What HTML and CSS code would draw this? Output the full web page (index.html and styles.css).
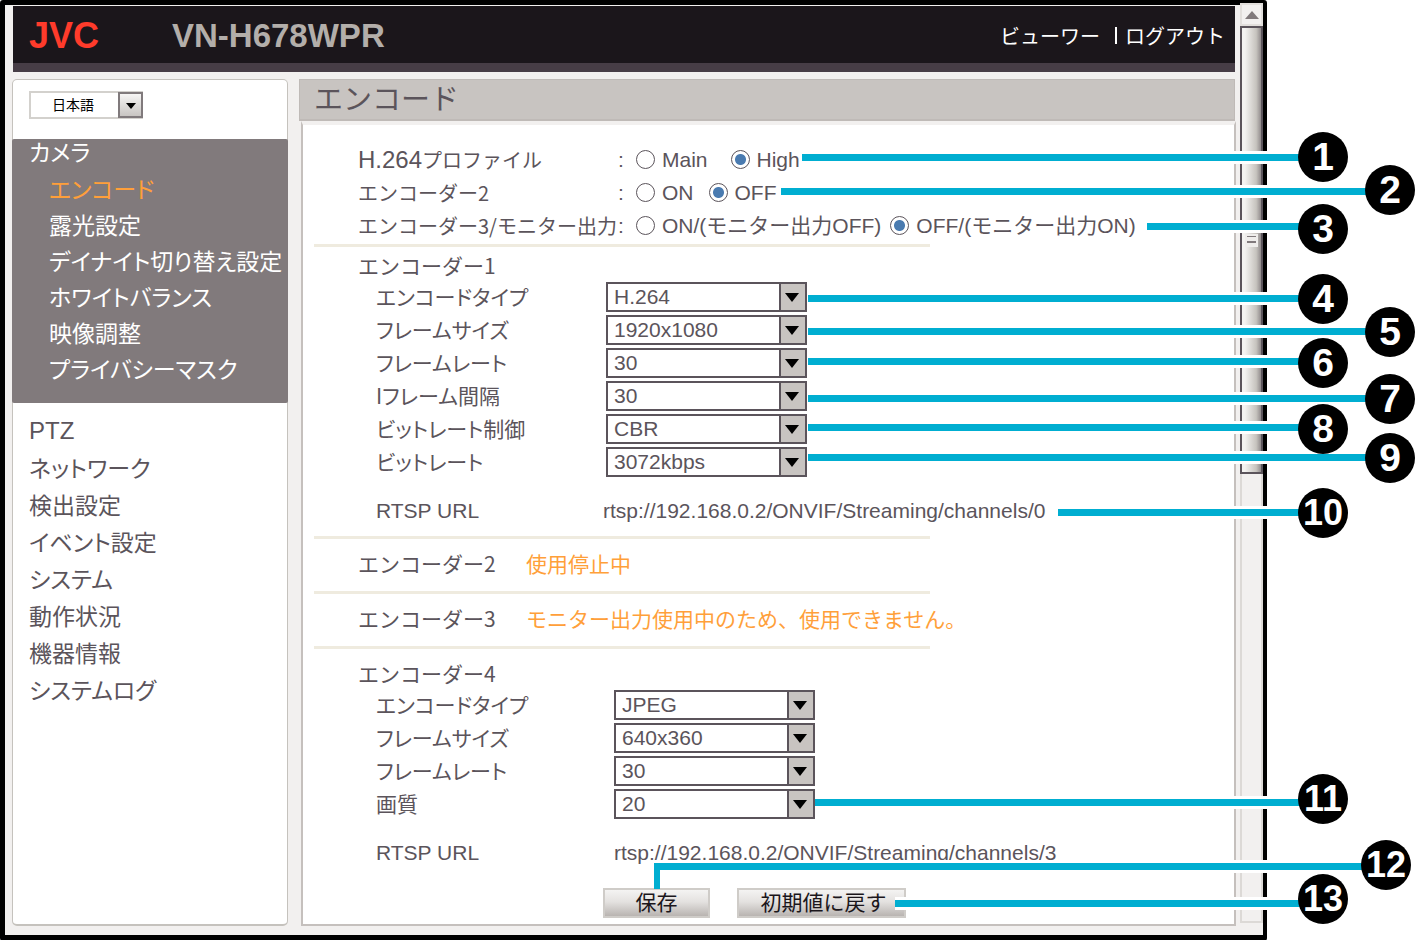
FILE: index.html
```html
<!DOCTYPE html>
<html lang="ja">
<head>
<meta charset="utf-8">
<title>VN-H678WPR エンコード</title>
<link rel="stylesheet" href="styles.css">
</head>
<body>
<div class="frame">
  <div class="page">
    <header class="header">
      <span class="logo">JVC</span>
      <span class="model">VN-H678WPR</span>
      <nav class="top-links"><a href="#">ビューワー</a><span class="bar"></span><a href="#">ログアウト</a></nav>
    </header>
    <div class="columns">
      <aside class="sidebar">
        <div class="language">
          <span class="lang-box"><select class="lang-select" aria-label="言語"><option>日本語</option></select></span>
        </div>
        <nav class="camera-menu">
          <a class="camera" href="#">カメラ</a>
          <a class="sub active" href="#">エンコード</a>
          <a class="sub" href="#">露光設定</a>
          <a class="sub" href="#">デイナイト切り替え設定</a>
          <a class="sub" href="#">ホワイトバランス</a>
          <a class="sub" href="#">映像調整</a>
          <a class="sub" href="#">プライバシーマスク</a>
        </nav>
        <nav class="menu">
          <a class="latin" href="#">PTZ</a>
          <a href="#">ネットワーク</a>
          <a href="#">検出設定</a>
          <a href="#">イベント設定</a>
          <a href="#">システム</a>
          <a href="#">動作状況</a>
          <a href="#">機器情報</a>
          <a href="#">システムログ</a>
        </nav>
      </aside>
      <main class="main">
        <h1 class="title">エンコード</h1>
        <form class="panel">
          <div class="row" role="radiogroup" aria-label="H.264プロファイル">
            <span class="name"><span class="latin">H.264</span>プロファイル</span><span class="colon">:</span>
            <label class="choice wide"><input class="radio" type="radio" name="profile">Main</label>
            <label class="choice"><input class="radio" type="radio" name="profile" checked>High</label>
          </div>
          <div class="row" role="radiogroup" aria-label="エンコーダー2">
            <span class="name">エンコーダー2</span><span class="colon">:</span>
            <label class="choice medium"><input class="radio" type="radio" name="enc2">ON</label>
            <label class="choice"><input class="radio" type="radio" name="enc2" checked>OFF</label>
          </div>
          <div class="row" role="radiogroup" aria-label="エンコーダー3/モニター出力">
            <span class="name">エンコーダー3/モニター出力</span><span class="colon">:</span>
            <label class="choice"><input class="radio" type="radio" name="enc3">ON/(モニター出力OFF)</label>
            <label class="choice"><input class="radio" type="radio" name="enc3" checked>OFF/(モニター出力ON)</label>
          </div>
          <hr class="rule">
          <h2 class="section">エンコーダー1</h2>
          <div class="fields">
            <label for="type1">エンコードタイプ</label><span class="select"><select id="type1"><option>H.264</option></select></span>
            <label for="size1">フレームサイズ</label><span class="select"><select id="size1"><option>1920x1080</option></select></span>
            <label for="rate1">フレームレート</label><span class="select"><select id="rate1"><option>30</option></select></span>
            <label for="iframe1">Iフレーム間隔</label><span class="select"><select id="iframe1"><option>30</option></select></span>
            <label for="control1">ビットレート制御</label><span class="select"><select id="control1"><option>CBR</option></select></span>
            <label for="bitrate1">ビットレート</label><span class="select"><select id="bitrate1"><option>3072kbps</option></select></span>
          </div>
          <div class="url-row"><span class="url-name">RTSP URL</span><span>rtsp://192.168.0.2/ONVIF/Streaming/channels/0</span></div>
          <hr class="rule">
          <div class="status"><h2>エンコーダー2</h2><span class="notice">使用停止中</span></div>
          <hr class="rule">
          <div class="status"><h2>エンコーダー3</h2><span class="notice">モニター出力使用中のため、使用できません。</span></div>
          <hr class="rule">
          <h2 class="section last">エンコーダー4</h2>
          <div class="fields shifted">
            <label for="type4">エンコードタイプ</label><span class="select"><select id="type4"><option>JPEG</option></select></span>
            <label for="size4">フレームサイズ</label><span class="select"><select id="size4"><option>640x360</option></select></span>
            <label for="rate4">フレームレート</label><span class="select"><select id="rate4"><option>30</option></select></span>
            <label for="quality4">画質</label><span class="select"><select id="quality4"><option>20</option></select></span>
          </div>
          <div class="url-row shifted"><span class="url-name">RTSP URL</span><span>rtsp://192.168.0.2/ONVIF/Streaming/channels/3</span></div>
          <div class="actions">
            <button class="button save" type="button">保存</button>
            <button class="button reset" type="button">初期値に戻す</button>
          </div>
        </form>
      </main>
    </div>
  </div>
  <div class="scrollbar" aria-hidden="true">
    <div class="scroll-up"></div>
    <div class="track"><div class="thumb"><span class="grip"></span></div></div>
  </div>
</div>
<div class="callout c1"><b>1</b></div>
<div class="callout c2"><b>2</b></div>
<div class="callout c3"><b>3</b></div>
<div class="callout c4"><b>4</b></div>
<div class="callout c5"><b>5</b></div>
<div class="callout c6"><b>6</b></div>
<div class="callout c7"><b>7</b></div>
<div class="callout c8"><b>8</b></div>
<div class="callout c9"><b>9</b></div>
<div class="callout double c10"><b>10</b></div>
<div class="callout double c11"><b>11</b></div>
<div class="callout double c12"><b>12</b></div>
<div class="callout double c13"><b>13</b></div>
</body>
</html>
```
FILE: styles.css
```css
*, *::before, *::after { box-sizing: border-box; }

body {
  position: relative;
  margin: 0;
  background: #fff;
  color: #5b545b;
  font-family: "Liberation Sans", "Noto Sans CJK JP", sans-serif;
  font-size: 20px;
}

a { color: inherit; text-decoration: none; }
h1, h2 { margin: 0; font-weight: normal; }

.latin { font-family: "Liberation Sans", sans-serif; font-size: 24px; }

.frame {
  display: flex;
  min-height: 100vh;
  margin-right: 151px;
  border: 5px solid #000;
  border-right-width: 4px;
  border-bottom-width: 6px;
  border-radius: 3px;
  background: #f2f0ef;
}

.page {
  flex: 1;
  display: flex;
  flex-direction: column;
  gap: 7px;
  min-width: 0;
  padding: 1px 5px 9px 7px;
}

.header {
  display: flex;
  align-items: center;
  height: 66px;
  margin-left: 1px;
  padding: 2px 10px 0 16px;
  border-bottom: 9px solid #473d46;
  background: #1b161b;
}

.logo {
  width: 143px;
  color: #ff3b2b;
  font-size: 36px;
  font-weight: bold;
}

.model {
  flex: 1;
  color: #b3aeaa;
  font-size: 33px;
  font-weight: bold;
}

.top-links {
  display: flex;
  align-items: center;
  color: #fff;
  font-family: "Noto Sans CJK JP", sans-serif;
}

.bar {
  width: 2px;
  height: 17px;
  margin: 0 8px 0 15px;
  background: #fff;
}

.columns { flex: 1; display: flex; gap: 11px; }

.sidebar {
  flex: none;
  width: 276px;
  border: 1px solid #c5c2bd;
  border-bottom-width: 2px;
  border-radius: 5px;
  background: #fff;
  font-family: "Noto Sans CJK JP", sans-serif;
  font-size: 23px;
  font-feature-settings: "palt";
}

.sidebar a { display: block; white-space: nowrap; }

.language { height: 59px; padding: 11px 16px; }

.lang-box {
  position: relative;
  display: flex;
  width: 114px;
  height: 28px;
}

.lang-select {
  appearance: none;
  width: 100%;
  height: 100%;
  margin: 0;
  padding: 0 0 2px 21px;
  border: 2px solid #d3d1cd;
  border-radius: 0;
  background: #fff;
  color: #000;
  font-family: "Noto Sans CJK JP", sans-serif;
  font-size: 14px;
}

.lang-box::before {
  content: "";
  position: absolute;
  top: 1px;
  right: 0;
  width: 25px;
  height: 26px;
  border: 2px solid #807a7c;
  background: linear-gradient(#f6f5f4, #c8c5c2);
  pointer-events: none;
}

.lang-box::after {
  content: "";
  position: absolute;
  top: 12px;
  right: 7px;
  border: 5px solid transparent;
  border-top: 6px solid #000;
  border-bottom: 0;
  pointer-events: none;
}

.camera-menu {
  margin: 0 -1px;
  padding-bottom: 17px;
  background: #817a7c;
  color: #fff;
  border-radius: 2px;
}

.sidebar .camera { padding: 0 17px 7px; line-height: 24px; }
.sub { padding-left: 37px; line-height: 36px; }
.active { color: #ff9f3a; }
.menu { padding: 7px 16px; line-height: 37px; }
.menu .latin { padding-top: 2px; }

.main { flex: 1; display: flex; flex-direction: column; min-width: 0; }

.title {
  padding: 0 0 4px 14px;
  border: 1px solid #bfbab7;
  border-bottom-width: 2px;
  background: #c8c4c1;
  font-family: "Noto Sans CJK JP", sans-serif;
  font-size: 29px;
  line-height: 35px;
}

.panel {
  flex: 1;
  margin: 0 -1px 0 2px;
  padding: 18px 11px 6px;
  border: 2px solid #c5c0bd;
  border-top: 4px solid #f2f0ef;
  background: #fff;
}

.row {
  display: flex;
  align-items: center;
  height: 33px;
  margin-left: 44px;
  font-size: 21px;
  line-height: 28px;
  white-space: nowrap;
}

.name {
  width: 260px;
  font-family: "Noto Sans CJK JP", sans-serif;
  font-size: 20px;
}

.colon { width: 18px; }
.choice { display: flex; align-items: center; margin-right: 9px; }
.wide { margin-right: 23px; }
.medium { margin-right: 15px; }

.radio {
  appearance: none;
  flex: none;
  width: 19px;
  height: 19px;
  margin: 0 7px 0 0;
  border: 1px solid #5b545b;
  border-radius: 50%;
  background: #fff;
}

.radio:checked { background: radial-gradient(circle, #4a7bb0 5px, #fff 6px); }

.rule {
  max-width: 616px;
  height: 3px;
  margin: 0;
  border: 0;
  background: #efebdf;
}

.row + .rule { margin-top: 2px; }

.section, .status h2, .notice, .fields label {
  font-family: "Noto Sans CJK JP", sans-serif;
  font-size: 21px;
}

.section { margin: 2px 0 1px 44px; line-height: 32px; }
.last { margin-top: 8px; }

.fields {
  display: grid;
  grid-template-columns: 230px 201px;
  row-gap: 3px;
  margin-left: 62px;
}

.fields.shifted { grid-template-columns: 238px 201px; }

.fields label {
  line-height: 28px;
  font-feature-settings: "palt";
}

.select { position: relative; height: 30px; }

.select select {
  appearance: none;
  width: 100%;
  height: 100%;
  margin: 0;
  padding: 0 30px 2px 6px;
  border: 2px solid #5b545b;
  border-radius: 0;
  background: #fff;
  color: inherit;
  font-family: "Liberation Sans", sans-serif;
  font-size: 21px;
}

.select::before {
  content: "";
  position: absolute;
  top: 0;
  right: 0;
  width: 28px;
  height: 30px;
  border: 2px solid #5b545b;
  background: #c8c4c1;
  pointer-events: none;
}

.select::after {
  content: "";
  position: absolute;
  top: 11px;
  right: 8px;
  border: 7px solid transparent;
  border-top: 9px solid #000;
  border-bottom: 0;
  pointer-events: none;
}

.url-row {
  display: flex;
  margin: 17px 0 9px 62px;
  font-size: 21px;
  line-height: 33px;
}

.url-name { width: 227px; }
.url-row.shifted { margin-bottom: 19px; }
.shifted .url-name { width: 238px; }

.status {
  display: flex;
  align-items: center;
  height: 52px;
  margin-left: 44px;
  padding-bottom: 5px;
}

.status h2 { width: 168px; }
.notice { color: #ff9f3a; white-space: nowrap; }

.actions { display: flex; gap: 27px; margin-left: 289px; }

.button {
  height: 30px;
  padding: 0 0 4px;
  border: 2px solid #cfccc8;
  border-radius: 0;
  background: linear-gradient(#f4f3f2, #e4e2e0 45%, #b9b4b1);
  color: #1b161b;
  font-family: "Noto Sans CJK JP", sans-serif;
  font-size: 21px;
  line-height: 22px;
}

.save { width: 107px; }
.reset { width: 169px; padding-left: 4px; }

.scrollbar {
  display: flex;
  flex-direction: column;
  width: 23px;
  margin-top: -2px;
  padding-bottom: 12px;
}

.scroll-up {
  display: flex;
  justify-content: center;
  align-items: center;
  height: 23px;
  border: 2px solid #e2dfdc;
  background: #f2f0ef;
}

.scroll-up::before {
  content: "";
  border: 7px solid transparent;
  border-bottom: 8px solid #817a7c;
  border-top: 0;
}

.track { flex: 1; border: 1px solid #dcd9d6; border-width: 0 2px 2px; }

.thumb {
  display: flex;
  justify-content: center;
  align-items: center;
  height: 50%;
  margin: 0 -2px;
  border: 2px solid #5b545b;
  background: linear-gradient(90deg, #f4f3f1 15%, #c6c3be 75%, #918b8c);
}

.grip {
  width: 13px;
  height: 13px;
  margin-bottom: 18px;
  border: 2px solid #efedeb;
  background: linear-gradient(#817a7c 1px, #efedeb 1px 5px, #817a7c 5px 7px, #efedeb 7px);
}

/* Numbered callouts: a leader line running to a round badge. */
.callout {
  --line: 21px;
  position: absolute;
  height: 50px;
  pointer-events: none;
}

.callout::before {
  content: "";
  position: absolute;
  z-index: 1;
  top: var(--line);
  left: 0;
  right: 25px;
  height: 7px;
  background: #00aed1;
  box-shadow: 0 -3px #fff, 0 3px #fff;
}

.callout b {
  position: absolute;
  z-index: 2;
  right: 0;
  width: 50px;
  height: 50px;
  border-radius: 50%;
  background: #000;
  color: #fff;
  font-size: 39px;
  line-height: 50px;
  text-align: center;
}

.double b { font-size: 36px; }

.c1 { top: 132px; left: 802px; right: 70px; --line: 22px; }
.c2 { top: 165px; left: 781px; right: 3px; --line: 23px; }
.c3 { top: 204px; left: 1147px; right: 70px; --line: 19px; }
.c4 { top: 274px; left: 808px; right: 70px; }
.c5 { top: 307px; left: 808px; right: 3px; }
.c6 { top: 338px; left: 808px; right: 70px; --line: 20px; }
.c7 { top: 374px; left: 808px; right: 3px; }
.c8 { top: 404px; left: 808px; right: 70px; --line: 20px; }
.c9 { top: 433px; left: 808px; right: 3px; }
.c10 { top: 488px; left: 1058px; right: 70px; }
.c11 { top: 774px; left: 815px; right: 70px; --line: 25px; }
.c12 { top: 840px; left: 654px; right: 7px; --line: 23px; }
.c13 { top: 874px; left: 895px; right: 70px; --line: 26px; }

.c12::after {
  content: "";
  position: absolute;
  z-index: 1;
  top: 23px;
  left: 0;
  width: 6px;
  height: 26px;
  background: #00aed1;
}
```
